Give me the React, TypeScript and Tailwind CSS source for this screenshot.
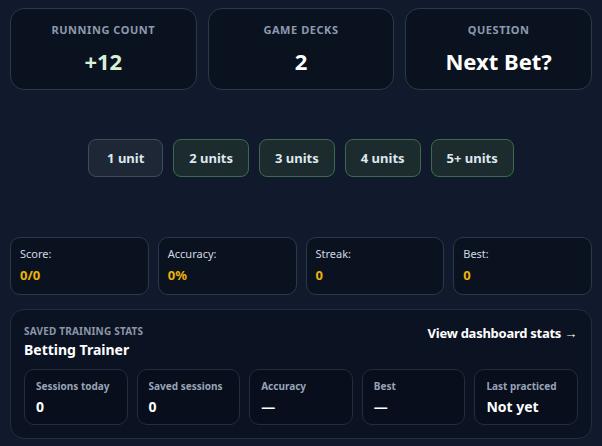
import React from "react";

const font = { fontFamily: '"Noto Sans", "Open Sans", sans-serif' };

function TopCard({ label, value, valueClass }: { label: string; value: string; valueClass: string }) {
  return (
    <div className="flex h-[82px] flex-col items-center rounded-[14px] border border-[#2a384c] bg-[#0b121f] pt-[14px]">
      <div className="text-[11px] font-bold uppercase leading-[14px] tracking-[0.05em] text-[#8b9ab0]">{label}</div>
      <div className={`mt-[10px] text-[22px] font-bold leading-[28px] ${valueClass}`}>{value}</div>
    </div>
  );
}

function Btn({ label, active }: { label: string; active?: boolean }) {
  return (
    <button
      className={`h-[38px] min-w-[75px] rounded-[8px] border px-[15px] text-[13px] font-bold leading-none text-[#dfe7ee] ${
        active ? "border-[#3f4c5e] bg-[#1d2735]" : "border-[#3c6b4b] bg-[#1b2b2e]"
      }`}
    >
      {label}
    </button>
  );
}

function Stat({ label, value }: { label: string; value: string }) {
  return (
    <div className="h-[58px] rounded-[10px] border border-[#2a384c] bg-[#0b121f] px-[9px] pt-[9px]">
      <div className="text-[11px] leading-[14px] text-[#d0d8e2]">{label}</div>
      <div className="mt-[5px] text-[13px] font-bold leading-[18px] text-[#eab308]">{value}</div>
    </div>
  );
}

function Mini({ label, value }: { label: string; value: string }) {
  return (
    <div className="h-[56px] rounded-[10px] border border-[#222e40] bg-[#080e1c] px-[11px] pt-[10px]">
      <div className="text-[10px] font-bold leading-[13px] text-[#98a4b6]">{label}</div>
      <div className="mt-[5px] text-[14px] font-bold leading-[18px] text-white">{value}</div>
    </div>
  );
}

export default function App() {
  return (
    <div style={font} className="h-[446px] w-[602px] overflow-hidden bg-[#111a2c] px-[10px] pt-[8px]">
      <div className="grid grid-cols-3 gap-[11px]">
        <TopCard label="Running Count" value="+12" valueClass="text-[#d8f0d8]" />
        <TopCard label="Game Decks" value="2" valueClass="text-white" />
        <TopCard label="Question" value="Next Bet?" valueClass="text-white" />
      </div>

      <div className="mt-[49px] flex justify-center gap-[10px]">
        <Btn label="1 unit" active />
        <Btn label="2 units" />
        <Btn label="3 units" />
        <Btn label="4 units" />
        <Btn label="5+ units" />
      </div>

      <div className="mt-[60px] grid grid-cols-4 gap-[9px]">
        <Stat label="Score:" value="0/0" />
        <Stat label="Accuracy:" value="0%" />
        <Stat label="Streak:" value="0" />
        <Stat label="Best:" value="0" />
      </div>

      <div className="mt-[14px] h-[130px] rounded-[14px] border border-[#222e40] bg-[#0b1221] px-[13px] pt-[14px]">
        <div className="flex items-start justify-between">
          <div>
            <div className="text-[10px] font-bold uppercase leading-[14px] tracking-[0.02em] text-[#8b97aa]">
              Saved training stats
            </div>
            <div className="mt-[3px] text-[14px] font-bold leading-[18px] text-white">Betting Trainer</div>
          </div>
          <div className="pr-[1px] pt-[1px] text-[13px] font-bold leading-[16px] tracking-[-0.02em] text-white">
            View dashboard stats →
          </div>
        </div>
        <div className="mt-[10px] grid grid-cols-5 gap-[9px]">
          <Mini label="Sessions today" value="0" />
          <Mini label="Saved sessions" value="0" />
          <Mini label="Accuracy" value="—" />
          <Mini label="Best" value="—" />
          <Mini label="Last practiced" value="Not yet" />
        </div>
      </div>
    </div>
  );
}
